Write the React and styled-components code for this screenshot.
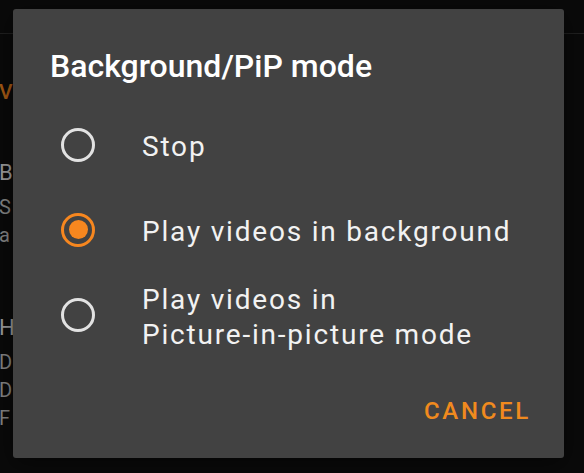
import React, { useState } from "react";
import styled, { createGlobalStyle } from "styled-components";

const GlobalStyle = createGlobalStyle`
  html, body {
    margin: 0;
    padding: 0;
    background: #0a0a0a;
    font-family: Roboto, "Noto Sans", "Liberation Sans", sans-serif;
    overflow: hidden;
  }
`;

const options = [
  { id: "stop", label: "Stop" },
  { id: "background", label: "Play videos in background" },
  { id: "pip", label: ["Play videos in", "Picture-in-picture mode"] },
];

const Screen = styled.div`
  position: relative;
  width: 584px;
  height: 473px;
  overflow: hidden;
  background: #0a0a0a;
`;

/* settings page sitting behind the dialog */
const TopBar = styled.div`
  height: 33px;
  border-bottom: 1px solid #202020;
`;

const Page = styled.div`
  display: flex;
  flex-direction: column;
`;

const Category = styled.div`
  margin: 44px 0 20px -1px;
  font-size: 21px;
  line-height: 28px;
  font-weight: 500;
  letter-spacing: 3px;
  color: #a65a14;
`;

const Pref = styled.div`
  display: flex;
  flex-direction: column;
  padding: 33px 0 32px;
  margin-left: -1px;
  letter-spacing: 3px;
`;

const PrefTitle = styled.div`
  font-size: 22px;
  line-height: 28px;
  color: #9c9c9c;
  margin-bottom: 6px;
`;

const PrefSummary = styled.div`
  font-size: 20px;
  line-height: 28px;
  color: #858585;
`;

/* dialog */
const Dialog = styled.div`
  position: absolute;
  left: 13px;
  top: 9px;
  width: 551px;
  height: 449px;
  box-sizing: border-box;
  background: #424242;
  border-radius: 3px;
  box-shadow: 0 6px 24px rgba(0, 0, 0, 0.5);
  display: flex;
  flex-direction: column;
  padding-top: 37px;
`;

const Title = styled.h2`
  margin: 0;
  padding-left: 37px;
  font-size: 32px;
  line-height: 40px;
  font-weight: 500;
  color: #ffffff;
`;

const OptionList = styled.div`
  display: flex;
  flex-direction: column;
  margin-top: 16px;
`;

const Option = styled.label`
  display: flex;
  align-items: center;
  min-height: 85px;
  padding-left: 48px;
  cursor: pointer;
`;

const Radio = styled.span`
  flex: none;
  position: relative;
  width: 34px;
  height: 34px;
  box-sizing: border-box;
  border-radius: 50%;
  border: 3px solid ${(p) => (p.$checked ? "#f7871f" : "#e2e2e2")};
  margin-right: 47px;

  &::after {
    content: "";
    position: absolute;
    left: 50%;
    top: 50%;
    width: 19px;
    height: 19px;
    margin: -9.5px 0 0 -9.5px;
    border-radius: 50%;
    background: #f7871f;
    transform: scale(${(p) => (p.$checked ? 1 : 0)});
  }
`;

const Label = styled.span`
  font-size: 28px;
  line-height: 35px;
  letter-spacing: 1.8px;
  color: #f2f2f2;
  padding-top: 4px;
`;

const Actions = styled.div`
  margin-top: auto;
  display: flex;
  justify-content: flex-end;
  padding: 0 33px 31px 0;
`;

const TextButton = styled.button`
  border: none;
  background: none;
  padding: 0;
  font-family: inherit;
  font-size: 24px;
  line-height: 32px;
  font-weight: 500;
  letter-spacing: 2.7px;
  color: #f08a1e;
  cursor: pointer;
`;

export default function App() {
  const [mode, setMode] = useState("background");

  return (
    <Screen>
      <GlobalStyle />
      <Page>
        <TopBar />
        <Category>Video and audio</Category>
        <Pref>
          <PrefTitle>Background player</PrefTitle>
          <PrefSummary>
            Show a notification
            <br />
            and keep playing audio
          </PrefSummary>
        </Pref>
        <Pref>
          <PrefTitle>Hardware decoding</PrefTitle>
          <PrefSummary>
            Decode videos
            <br />
            Depends on device
            <br />
            Faster on most phones
          </PrefSummary>
        </Pref>
      </Page>

      <Dialog role="dialog">
        <Title>Background/PiP mode</Title>
        <OptionList>
          {options.map((o) => (
            <Option key={o.id} onClick={() => setMode(o.id)}>
              <Radio $checked={mode === o.id} />
              <Label>
                {Array.isArray(o.label)
                  ? o.label.map((line, i) => (
                      <React.Fragment key={i}>
                        {i > 0 && <br />}
                        {line}
                      </React.Fragment>
                    ))
                  : o.label}
              </Label>
            </Option>
          ))}
        </OptionList>
        <Actions>
          <TextButton>CANCEL</TextButton>
        </Actions>
      </Dialog>
    </Screen>
  );
}
